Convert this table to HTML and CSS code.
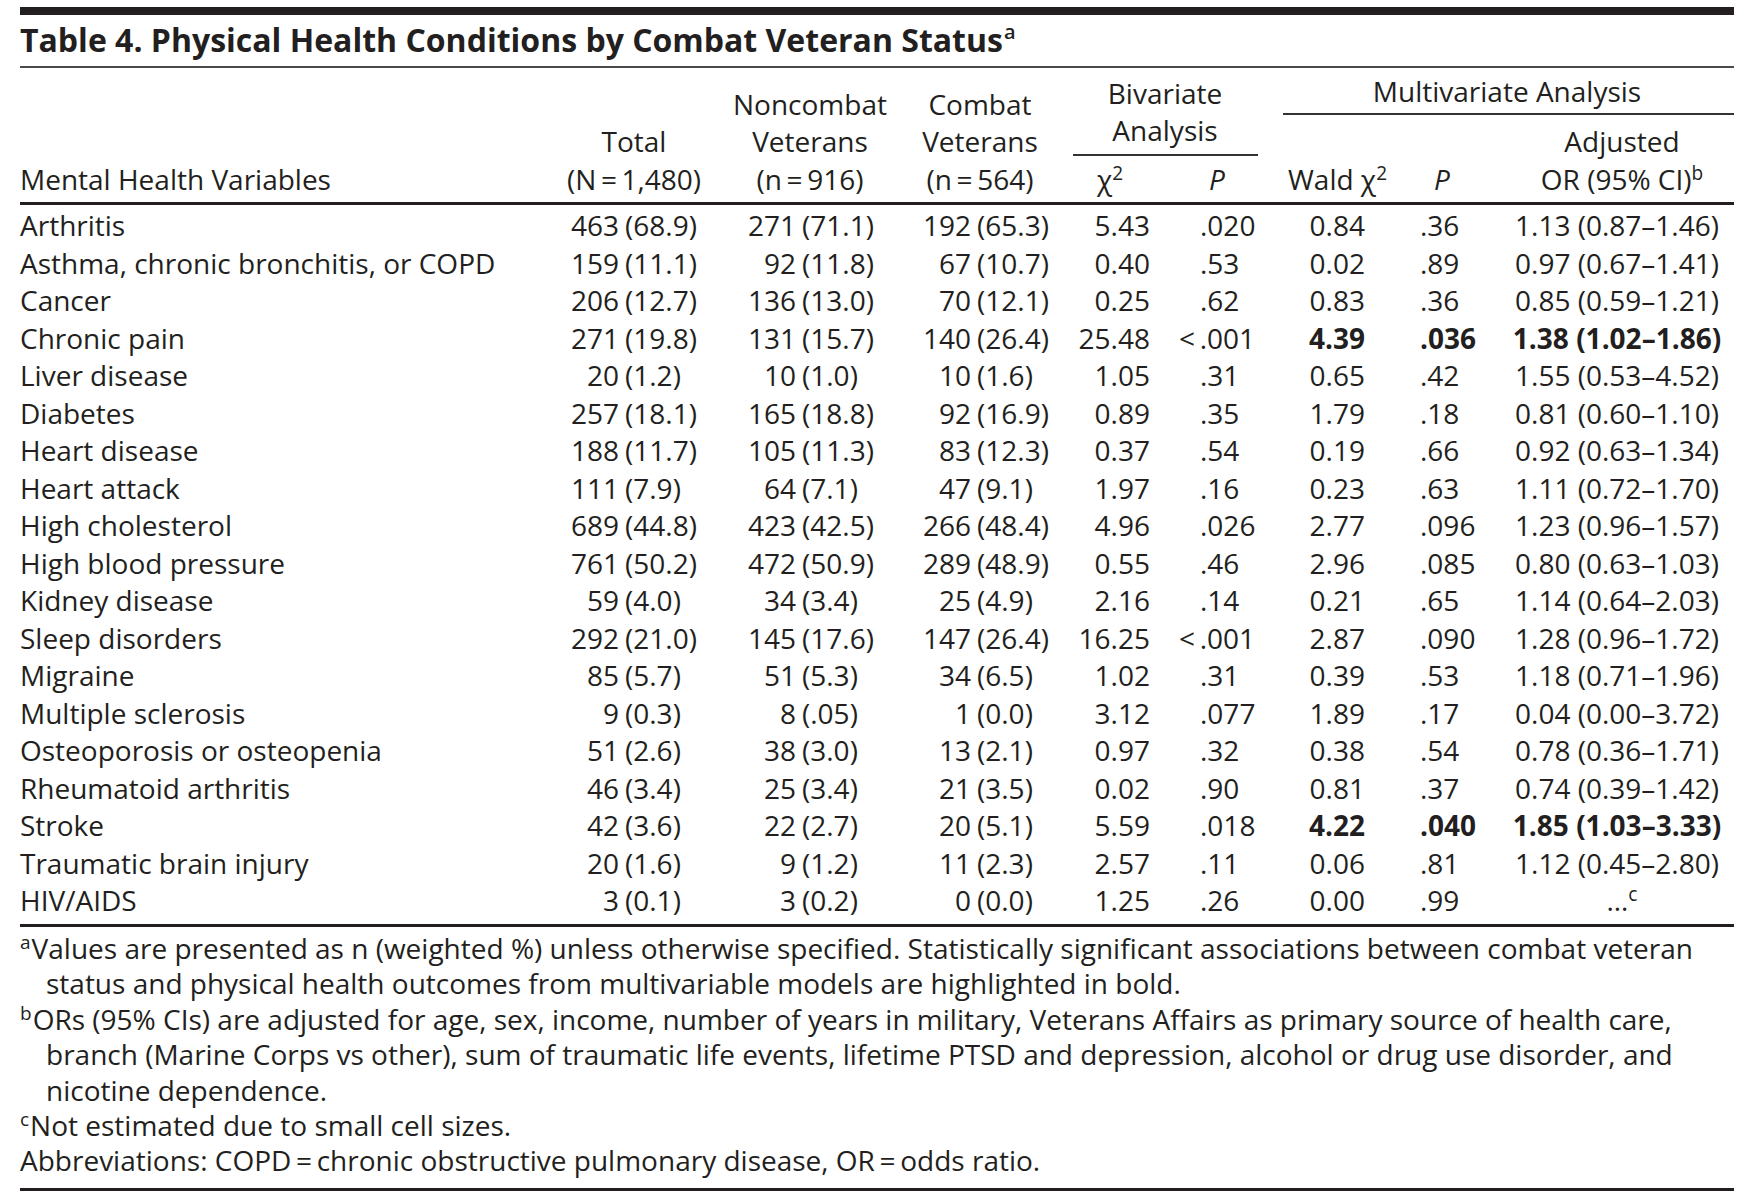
FILE: index.html
```html
<!DOCTYPE html>
<html lang="en">
<head>
<meta charset="utf-8">
<title>Table 4. Physical Health Conditions by Combat Veteran Status</title>
<link rel="stylesheet" href="styles.css">
</head>
<body>
<div class="page">
  <div class="topbar"></div>
  <h1 class="title">Table 4. Physical Health Conditions by Combat Veteran Status<span class="sup tsup">a</span></h1>
  <div class="rule-title"></div>

  <div class="cols thead">
    <div class="h-lab">Mental Health Variables</div>
    <div class="h-c h-total">Total<br>(N&thinsp;=&thinsp;1,480)</div>
    <div class="h-c">Noncombat<br>Veterans<br>(n&thinsp;=&thinsp;916)</div>
    <div class="h-c">Combat<br>Veterans<br>(n&thinsp;=&thinsp;564)</div>
    <div class="h-grp h-biv">
      <div class="g-title">Bivariate<br>Analysis</div>
      <div class="g-rule"></div>
      <div class="g-sub biv-sub">
        <div class="h-chi">χ<span class="sup">2</span></div>
        <div class="h-bp"><i>P</i></div>
      </div>
    </div>
    <div class="h-grp h-mul">
      <div class="g-title">Multivariate Analysis</div>
      <div class="g-rule"></div>
      <div class="g-sub mul-sub">
        <div class="h-wald">Wald χ<span class="sup">2</span></div>
        <div class="h-mp"><i>P</i></div>
        <div class="h-or">Adjusted<br>OR (95% CI)<span class="sup">b</span></div>
      </div>
    </div>
  </div>
  <div class="rule-head"></div>

  <div class="cols tbody">
    <div class="lab">Arthritis</div>
    <div class="num tot"><span class="n">463</span><span class="p">(68.9)</span></div>
    <div class="num non"><span class="n">271</span><span class="p">(71.1)</span></div>
    <div class="num com"><span class="n">192</span><span class="p">(65.3)</span></div>
    <div class="chi">5.43</div><div class="bp">.020</div>
    <div class="wald">0.84</div><div class="mp">.36</div><div class="or">1.13 (0.87–1.46)</div>

    <div class="lab">Asthma, chronic bronchitis, or COPD</div>
    <div class="num tot"><span class="n">159</span><span class="p">(11.1)</span></div>
    <div class="num non"><span class="n">92</span><span class="p">(11.8)</span></div>
    <div class="num com"><span class="n">67</span><span class="p">(10.7)</span></div>
    <div class="chi">0.40</div><div class="bp">.53</div>
    <div class="wald">0.02</div><div class="mp">.89</div><div class="or">0.97 (0.67–1.41)</div>

    <div class="lab">Cancer</div>
    <div class="num tot"><span class="n">206</span><span class="p">(12.7)</span></div>
    <div class="num non"><span class="n">136</span><span class="p">(13.0)</span></div>
    <div class="num com"><span class="n">70</span><span class="p">(12.1)</span></div>
    <div class="chi">0.25</div><div class="bp">.62</div>
    <div class="wald">0.83</div><div class="mp">.36</div><div class="or">0.85 (0.59–1.21)</div>

    <div class="lab">Chronic pain</div>
    <div class="num tot"><span class="n">271</span><span class="p">(19.8)</span></div>
    <div class="num non"><span class="n">131</span><span class="p">(15.7)</span></div>
    <div class="num com"><span class="n">140</span><span class="p">(26.4)</span></div>
    <div class="chi">25.48</div><div class="bp"><span class="lt">&lt;&thinsp;</span>.001</div>
    <div class="wald b">4.39</div><div class="mp b">.036</div><div class="or b">1.38 (1.02–1.86)</div>

    <div class="lab">Liver disease</div>
    <div class="num tot"><span class="n">20</span><span class="p">(1.2)</span></div>
    <div class="num non"><span class="n">10</span><span class="p">(1.0)</span></div>
    <div class="num com"><span class="n">10</span><span class="p">(1.6)</span></div>
    <div class="chi">1.05</div><div class="bp">.31</div>
    <div class="wald">0.65</div><div class="mp">.42</div><div class="or">1.55 (0.53–4.52)</div>

    <div class="lab">Diabetes</div>
    <div class="num tot"><span class="n">257</span><span class="p">(18.1)</span></div>
    <div class="num non"><span class="n">165</span><span class="p">(18.8)</span></div>
    <div class="num com"><span class="n">92</span><span class="p">(16.9)</span></div>
    <div class="chi">0.89</div><div class="bp">.35</div>
    <div class="wald">1.79</div><div class="mp">.18</div><div class="or">0.81 (0.60–1.10)</div>

    <div class="lab">Heart disease</div>
    <div class="num tot"><span class="n">188</span><span class="p">(11.7)</span></div>
    <div class="num non"><span class="n">105</span><span class="p">(11.3)</span></div>
    <div class="num com"><span class="n">83</span><span class="p">(12.3)</span></div>
    <div class="chi">0.37</div><div class="bp">.54</div>
    <div class="wald">0.19</div><div class="mp">.66</div><div class="or">0.92 (0.63–1.34)</div>

    <div class="lab">Heart attack</div>
    <div class="num tot"><span class="n">111</span><span class="p">(7.9)</span></div>
    <div class="num non"><span class="n">64</span><span class="p">(7.1)</span></div>
    <div class="num com"><span class="n">47</span><span class="p">(9.1)</span></div>
    <div class="chi">1.97</div><div class="bp">.16</div>
    <div class="wald">0.23</div><div class="mp">.63</div><div class="or">1.11 (0.72–1.70)</div>

    <div class="lab">High cholesterol</div>
    <div class="num tot"><span class="n">689</span><span class="p">(44.8)</span></div>
    <div class="num non"><span class="n">423</span><span class="p">(42.5)</span></div>
    <div class="num com"><span class="n">266</span><span class="p">(48.4)</span></div>
    <div class="chi">4.96</div><div class="bp">.026</div>
    <div class="wald">2.77</div><div class="mp">.096</div><div class="or">1.23 (0.96–1.57)</div>

    <div class="lab">High blood pressure</div>
    <div class="num tot"><span class="n">761</span><span class="p">(50.2)</span></div>
    <div class="num non"><span class="n">472</span><span class="p">(50.9)</span></div>
    <div class="num com"><span class="n">289</span><span class="p">(48.9)</span></div>
    <div class="chi">0.55</div><div class="bp">.46</div>
    <div class="wald">2.96</div><div class="mp">.085</div><div class="or">0.80 (0.63–1.03)</div>

    <div class="lab">Kidney disease</div>
    <div class="num tot"><span class="n">59</span><span class="p">(4.0)</span></div>
    <div class="num non"><span class="n">34</span><span class="p">(3.4)</span></div>
    <div class="num com"><span class="n">25</span><span class="p">(4.9)</span></div>
    <div class="chi">2.16</div><div class="bp">.14</div>
    <div class="wald">0.21</div><div class="mp">.65</div><div class="or">1.14 (0.64–2.03)</div>

    <div class="lab">Sleep disorders</div>
    <div class="num tot"><span class="n">292</span><span class="p">(21.0)</span></div>
    <div class="num non"><span class="n">145</span><span class="p">(17.6)</span></div>
    <div class="num com"><span class="n">147</span><span class="p">(26.4)</span></div>
    <div class="chi">16.25</div><div class="bp"><span class="lt">&lt;&thinsp;</span>.001</div>
    <div class="wald">2.87</div><div class="mp">.090</div><div class="or">1.28 (0.96–1.72)</div>

    <div class="lab">Migraine</div>
    <div class="num tot"><span class="n">85</span><span class="p">(5.7)</span></div>
    <div class="num non"><span class="n">51</span><span class="p">(5.3)</span></div>
    <div class="num com"><span class="n">34</span><span class="p">(6.5)</span></div>
    <div class="chi">1.02</div><div class="bp">.31</div>
    <div class="wald">0.39</div><div class="mp">.53</div><div class="or">1.18 (0.71–1.96)</div>

    <div class="lab">Multiple sclerosis</div>
    <div class="num tot"><span class="n">9</span><span class="p">(0.3)</span></div>
    <div class="num non"><span class="n">8</span><span class="p">(.05)</span></div>
    <div class="num com"><span class="n">1</span><span class="p">(0.0)</span></div>
    <div class="chi">3.12</div><div class="bp">.077</div>
    <div class="wald">1.89</div><div class="mp">.17</div><div class="or">0.04 (0.00–3.72)</div>

    <div class="lab">Osteoporosis or osteopenia</div>
    <div class="num tot"><span class="n">51</span><span class="p">(2.6)</span></div>
    <div class="num non"><span class="n">38</span><span class="p">(3.0)</span></div>
    <div class="num com"><span class="n">13</span><span class="p">(2.1)</span></div>
    <div class="chi">0.97</div><div class="bp">.32</div>
    <div class="wald">0.38</div><div class="mp">.54</div><div class="or">0.78 (0.36–1.71)</div>

    <div class="lab">Rheumatoid arthritis</div>
    <div class="num tot"><span class="n">46</span><span class="p">(3.4)</span></div>
    <div class="num non"><span class="n">25</span><span class="p">(3.4)</span></div>
    <div class="num com"><span class="n">21</span><span class="p">(3.5)</span></div>
    <div class="chi">0.02</div><div class="bp">.90</div>
    <div class="wald">0.81</div><div class="mp">.37</div><div class="or">0.74 (0.39–1.42)</div>

    <div class="lab">Stroke</div>
    <div class="num tot"><span class="n">42</span><span class="p">(3.6)</span></div>
    <div class="num non"><span class="n">22</span><span class="p">(2.7)</span></div>
    <div class="num com"><span class="n">20</span><span class="p">(5.1)</span></div>
    <div class="chi">5.59</div><div class="bp">.018</div>
    <div class="wald b">4.22</div><div class="mp b">.040</div><div class="or b">1.85 (1.03–3.33)</div>

    <div class="lab">Traumatic brain injury</div>
    <div class="num tot"><span class="n">20</span><span class="p">(1.6)</span></div>
    <div class="num non"><span class="n">9</span><span class="p">(1.2)</span></div>
    <div class="num com"><span class="n">11</span><span class="p">(2.3)</span></div>
    <div class="chi">2.57</div><div class="bp">.11</div>
    <div class="wald">0.06</div><div class="mp">.81</div><div class="or">1.12 (0.45–2.80)</div>

    <div class="lab">HIV/AIDS</div>
    <div class="num tot"><span class="n">3</span><span class="p">(0.1)</span></div>
    <div class="num non"><span class="n">3</span><span class="p">(0.2)</span></div>
    <div class="num com"><span class="n">0</span><span class="p">(0.0)</span></div>
    <div class="chi">1.25</div><div class="bp">.26</div>
    <div class="wald">0.00</div><div class="mp">.99</div><div class="or or-na">…<span class="sup">c</span></div>
  </div>
  <div class="rule-foot"></div>

  <div class="notes">
    <p class="fn"><span class="sup">a</span>Values are presented as n (weighted %) unless otherwise specified. Statistically significant associations between combat veteran<br>status and physical health outcomes from multivariable models are highlighted in bold.</p>
    <p class="fn"><span class="sup">b</span>ORs (95% CIs) are adjusted for age, sex, income, number of years in military, Veterans Affairs as primary source of health care,<br>branch (Marine Corps vs other), sum of traumatic life events, lifetime PTSD and depression, alcohol or drug use disorder, and<br>nicotine dependence.</p>
    <p class="fn"><span class="sup">c</span>Not estimated due to small cell sizes.</p>
    <p class="abbr">Abbreviations: COPD&thinsp;=&thinsp;chronic obstructive pulmonary disease, OR&thinsp;=&thinsp;odds ratio.</p>
  </div>
  <div class="rule-end"></div>
</div>
</body>
</html>
```
FILE: styles.css
```css
* {
  box-sizing: border-box;
  margin: 0;
  padding: 0;
}

html, body {
  background: #ffffff;
}

body {
  color: #231f20;
  font-family: "Open Sans", "Noto Sans", sans-serif;
  font-size: 28px;
}

.page {
  width: 1754px;
  padding: 7px 20px 0 20px;
}

.topbar {
  height: 8px;
  background: #231f20;
}

.title {
  font-size: 32px;
  font-weight: 700;
  line-height: 49px;
  margin-bottom: 2px;
  white-space: nowrap;
}

.sup {
  font-size: 0.68em;
  line-height: 0;
  vertical-align: 0.55em;
}

.tsup {
  font-weight: 600;
  font-size: 20px;
  vertical-align: 13px;
  margin-left: 1px;
}

.rule-title {
  height: 2px;
  background: #4a4a4a;
}

.cols {
  display: grid;
  grid-template-columns: 520px 180px 180px 160px 110px 110px 115px 105px 234px;
}

/* ---------- header ---------- */
.thead {
  height: 134px;
  padding-bottom: 4px;
  align-items: end;
  line-height: 37.5px;
  white-space: nowrap;
}

.h-c {
  text-align: center;
}

.h-total {
  padding-left: 8px;
}

.h-grp {
  display: flex;
  flex-direction: column;
  text-align: center;
}

.h-biv {
  grid-column: span 2;
}

.h-mul {
  grid-column: span 3;
}

.g-rule {
  height: 2px;
  background: #333333;
}

.h-biv .g-title {
  padding-right: 10px;
}

.h-biv .g-rule {
  margin: 4px 22px 0 13px;
}

.h-biv .g-sub {
  margin-top: 5px;
}

.h-mul .g-rule {
  margin: 2.5px 0 0 3px;
}

.h-mul .g-sub {
  margin-top: 8px;
}

.g-sub {
  display: grid;
  align-items: end;
}

.biv-sub {
  grid-template-columns: 110px 110px;
}

.mul-sub {
  grid-template-columns: 115px 105px 234px;
}

.h-chi {
  padding-right: 10px;
}

.h-bp {
  padding-right: 16px;
}

.h-mp {
  padding-right: 11px;
}

.h-or {
  padding-left: 10px;
}

.rule-head {
  height: 3px;
  background: #231f20;
}

/* ---------- body ---------- */
.tbody {
  padding: 2px 0 4.5px 0;
  line-height: 37.5px;
  white-space: nowrap;
}

.lab {
  text-align: left;
}

.num {
  display: flex;
}

.num .n {
  text-align: right;
}

.num .p {
  margin-left: 6px;
}

.tot .n {
  width: 79px;
}

.non .n {
  width: 76px;
}

.com .n {
  width: 71px;
}

.chi {
  text-align: right;
  padding-right: 20px;
}

.bp {
  text-align: left;
  padding-left: 30px;
}

.lt {
  margin-left: -21px;
}

.wald {
  text-align: right;
  padding-right: 30px;
}

.mp {
  text-align: left;
  padding-left: 25px;
}

.or {
  text-align: center;
}

.or-na {
  padding-left: 10px;
}

.b {
  font-weight: 700;
}

.rule-foot {
  height: 3px;
  background: #231f20;
}

/* ---------- notes ---------- */
.notes {
  padding: 4px 0 9px 0;
  line-height: 35.4px;
}

.fn {
  padding-left: 26px;
  text-indent: -26px;
  white-space: nowrap;
}

.fn .sup {
  font-size: 19px;
  vertical-align: 10px;
  margin-right: 1px;
}

.abbr {
  white-space: nowrap;
}

.rule-end {
  height: 3px;
  background: #231f20;
}
```
